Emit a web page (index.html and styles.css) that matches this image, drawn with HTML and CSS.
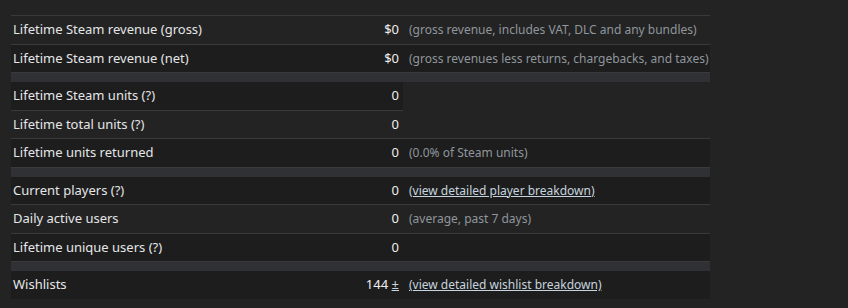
FILE: index.html
```html
<!DOCTYPE html>
<html>
<head>
<meta charset="utf-8">
<link rel="stylesheet" href="styles.css">
</head>
<body>
<div class="page">
<table class="summary">
  <colgroup><col class="c1"><col class="c2"><col class="c3"></colgroup>
  <tr><td class="label">Lifetime Steam revenue (gross)</td><td class="value">$0</td><td class="note">(gross revenue, includes VAT, DLC and any bundles)</td></tr>
  <tr><td class="label">Lifetime Steam revenue (net)</td><td class="value">$0</td><td class="note">(gross revenues less returns, chargebacks, and taxes)</td></tr>
  <tr class="sep"><td colspan="3"></td></tr>
  <tr><td class="label">Lifetime Steam units <span class="q">(?)</span></td><td class="value">0</td></tr>
  <tr><td class="label">Lifetime total units <span class="q">(?)</span></td><td class="value">0</td><td class="note"></td></tr>
  <tr><td class="label">Lifetime units returned</td><td class="value">0</td><td class="note">(0.0% of Steam units)</td></tr>
  <tr class="sep"><td colspan="3"></td></tr>
  <tr><td class="label">Current players <span class="q">(?)</span></td><td class="value">0</td><td class="note"><a href="#">(view detailed player breakdown)</a></td></tr>
  <tr><td class="label">Daily active users</td><td class="value">0</td><td class="note">(average, past 7 days)</td></tr>
  <tr><td class="label">Lifetime unique users <span class="q">(?)</span></td><td class="value">0</td><td class="note"></td></tr>
  <tr class="sep"><td colspan="3"></td></tr>
  <tr class="last"><td class="label">Wishlists</td><td class="value">144 <a href="#" class="pm">±</a></td><td class="note"><a href="#">(view detailed wishlist breakdown)</a></td></tr>
</table>
</div>
</body>
</html>
```
FILE: styles.css
```css
html, body {
  margin: 0;
  padding: 0;
  background: #232323;
}
body {
  font-family: "Noto Sans", "Liberation Sans", Arial, sans-serif;
  font-size: 13px;
  color: #e4e6e7;
}
.page {
  padding: 15px 0 0 11px;
}
.summary {
  border-collapse: collapse;
  table-layout: fixed;
  width: 699px;
  border-top: 1px solid #3a3a3a;
}
.c1 { width: 300px; }
.c2 { width: 92px; }
.c3 { width: 307px; }
.summary td {
  padding: 6px 0;
  height: 15.5px;
  line-height: 15.5px;
  border-bottom: 1px solid #3a3a3a;
  white-space: nowrap;
}
.summary tr:nth-child(even) td {
  background: #1d1d1d;
}
.summary tr.sep td {
  padding: 0;
  height: 9px;
  line-height: 0;
  background: #303134;
  border-bottom: 0;
}
.summary tr.last td {
  border-bottom: 0;
}
.label {
  padding-left: 2px !important;
  color: #e4e6e7;
}
.value {
  text-align: right;
  padding-right: 4px !important;
  color: #eeeeee;
}
.note {
  padding-left: 6px !important;
  font-size: 12px;
  color: #8f969c;
}
.note a, .pm {
  color: #c6d4df;
  text-decoration: underline;
}
```
